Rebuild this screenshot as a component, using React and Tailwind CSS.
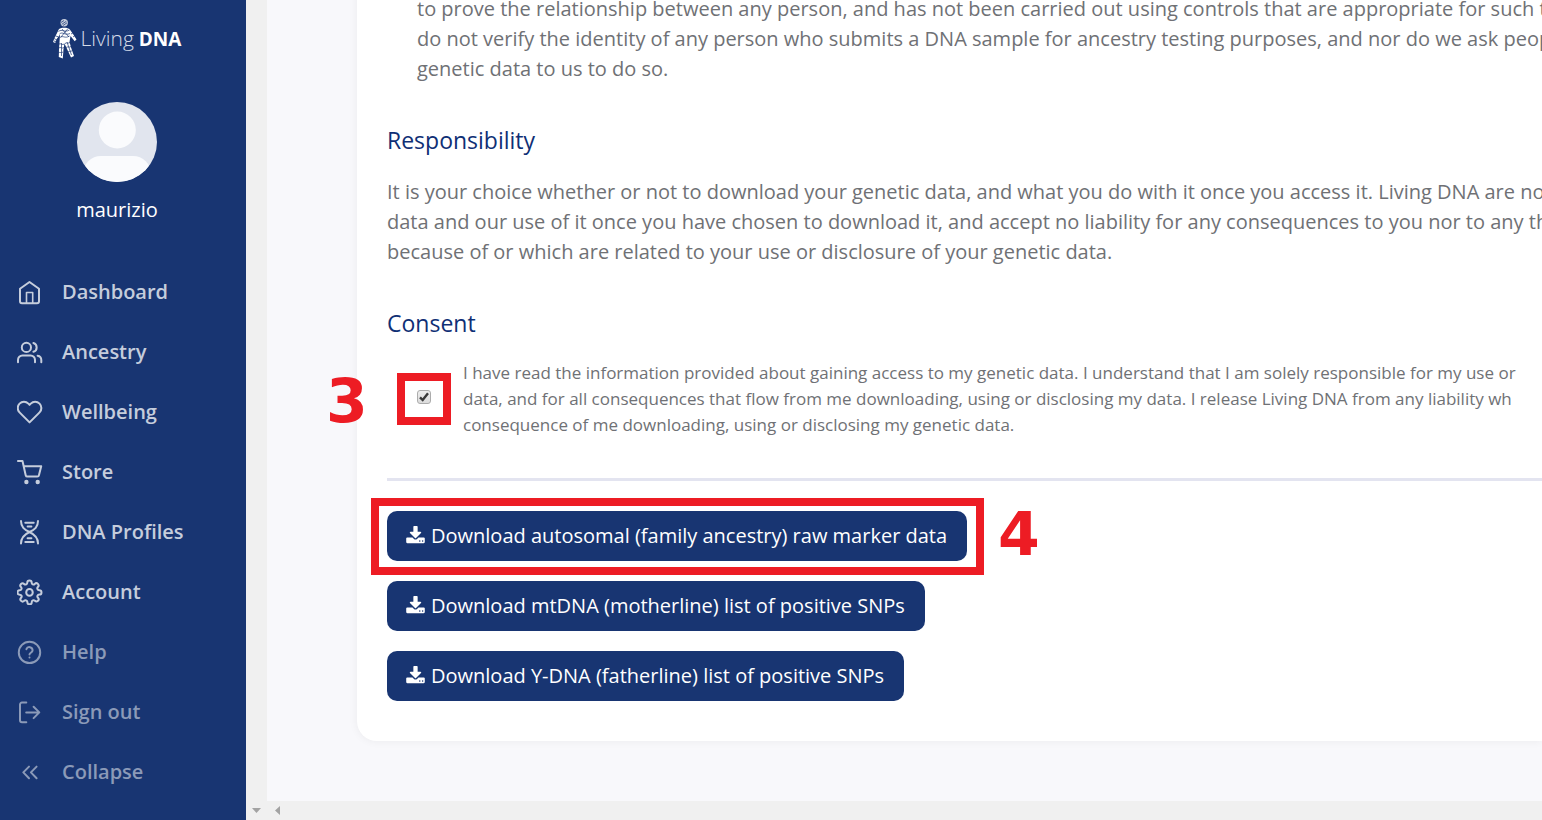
import React from "react";

function Icon({ children }) {
  return (
    <svg
      viewBox="0 0 26 26"
      className="size-[26px] shrink-0"
      fill="none"
      stroke="currentColor"
      strokeWidth="2"
      strokeLinecap="round"
      strokeLinejoin="round"
      aria-hidden="true"
    >
      {children}
    </svg>
  );
}

const icons = {
  home: (
    <>
      <path d="M3 9.7 12.5 3 22 9.7v12.6a2 2 0 0 1-2 2H5a2 2 0 0 1-2-2z" />
      <path d="M9.5 24V13.5h6.2V24" strokeWidth="1.6" />
    </>
  ),
  users: (
    <>
      <circle cx="9.4" cy="8.4" r="4.6" />
      <path d="M1 23.3v-2.4a4.4 4.4 0 0 1 4.4-4.4h8.2a4.4 4.4 0 0 1 4.4 4.4v2.4M16.4 4a4.6 4.6 0 0 1 0 8.8M20.6 16.7a4.4 4.4 0 0 1 3.7 4.3v2.3" />
    </>
  ),
  heart: (
    <path
      transform="translate(-1 -.6) scale(1.13)"
      strokeWidth="1.8"
      d="M20.84 4.61a5.5 5.5 0 0 0-7.78 0L12 5.67l-1.06-1.06a5.5 5.5 0 0 0-7.78 7.78l1.06 1.06L12 21.23l7.78-7.78 1.06-1.06a5.5 5.5 0 0 0 0-7.78z"
    />
  ),
  cart: (
    <>
      <path d="M.9 2h4.6l3.2 14.2a1.8 1.8 0 0 0 1.8 1.4h9.7a1.8 1.8 0 0 0 1.8-1.5L24.2 7.3H6.8" />
      <circle cx="9.4" cy="23" r="1.2" fill="currentColor" />
      <circle cx="20.7" cy="23" r="1.2" fill="currentColor" />
    </>
  ),
  dna: (
    <>
      <path d="M4 2C4 8 7.300 10.500 12.500 13S21 18.500 21 24.500M21 2C21 8 17.700 10.500 12.500 13S4 18.500 4 24.500" />
      <path d="M8.300 3.700h8.400M10.600 7.400h3.800M10.600 19.300h3.800M8.300 23h8.400" />
    </>
  ),
  gear: (
    <g transform="translate(-.6 .3) scale(1.09)" strokeWidth="1.85">
      <circle cx="12" cy="12" r="3" />
      <path d="M19.400 15a1.650 1.650 0 0 0 .33 1.820l.06.06a2 2 0 0 1-2.830 2.830l-.06-.06a1.650 1.650 0 0 0-1.820-.33 1.650 1.650 0 0 0-1 1.510V21a2 2 0 0 1-4 0v-.09A1.650 1.650 0 0 0 9 19.400a1.650 1.650 0 0 0-1.820.33l-.06.06a2 2 0 0 1-2.830-2.830l.06-.06a1.650 1.650 0 0 0 .33-1.820 1.650 1.650 0 0 0-1.510-1H3a2 2 0 0 1 0-4h.09A1.650 1.650 0 0 0 4.600 9a1.650 1.650 0 0 0-.33-1.820l-.06-.06a2 2 0 0 1 2.830-2.830l.06.06a1.650 1.650 0 0 0 1.820.33H9a1.650 1.650 0 0 0 1-1.510V3a2 2 0 0 1 4 0v.09a1.650 1.650 0 0 0 1 1.510 1.650 1.650 0 0 0 1.820-.33l.06-.06a2 2 0 0 1 2.830 2.830l-.06.06a1.650 1.650 0 0 0-.33 1.820V9a1.650 1.650 0 0 0 1.510 1H21a2 2 0 0 1 0 4h-.09a1.650 1.650 0 0 0-1.510 1z" />
    </g>
  ),
  help: (
    <>
      <circle cx="12.500" cy="13.400" r="10.700" />
      <path d="M9.400 10.200a3.200 3.200 0 0 1 6.200 1c0 2.100-3.100 2.700-3.100 4.200M12.500 18.400v.1" />
    </>
  ),
  signOut: (
    <path d="M9.300 23.300H5a2 2 0 0 1-2-2V5.500a2 2 0 0 1 2-2h4.300M9.200 13.400h13M16.600 7.700l5.700 5.700-5.700 5.700" />
  ),
  collapse: <path d="m12 7.600-5.700 5.800L12 19.200M19.600 7.600l-5.700 5.800 5.700 5.800" />,
};

const navItems = [
  { label: "Dashboard", icon: "home" },
  { label: "Ancestry", icon: "users" },
  { label: "Wellbeing", icon: "heart" },
  { label: "Store", icon: "cart" },
  { label: "DNA Profiles", icon: "dna" },
  { label: "Account", icon: "gear" },
  { label: "Help", icon: "help", muted: true },
  { label: "Sign out", icon: "signOut", muted: true },
];

function LogoFigure() {
  return (
    <svg viewBox="0 0 24 41" className="h-[41px] w-6 shrink-0" fill="none" aria-hidden="true">
      <circle cx="11.200" cy="4.800" r="3.700" fill="#fff" fillOpacity=".75" />
      <path
        fill="#fff"
        d="M6 11C8.500 9.300 14 9.300 16.500 11l3.500 5 3.500 5.500-1.800 1.700-4.200-5.200-1 6 1.700 6L21 38l-3 1.500-3.500-7.500-3-6.500-1 5.500-.7 9.500-4-1.500.2-8 .5-7 .5-7.500L3.700 21 2.200 25 0 24l1.500-4z"
      />
      <g stroke="#183572" strokeWidth=".7">
        <path d="m8.800 6.300 4.500-3M10 7.500l4-2.700M8 4.500l3-2" />
        <path d="M5.500 13.500c3.500-3 6 1.500 11-1.500M6.500 16c3.500-3 5 2 10.500-.5M7 19.500c3-2.500 5 1.500 9.500-1.500M9 11l7 8M15 10.500 8 19" />
        <path d="m1 20.500 3 1.500M.8 23l2.400.5M2.500 18l2.700.7M18 16l2.500-1.500M20 19l2-1.500" />
        <path d="M6 26c2-1 3 1.500 5.500 0M5.800 30c2-1.500 3 1 5-.5M5 35c2-1.500 3 .5 5-1M8.500 25v13" />
        <path d="M12 25.500c2-1.500 2.500.5 5-1M13 29.500c2-1.500 3 .5 5-1M15 34c1.500-1.500 2.500 0 4.500-1.500M14 24l4.500 13" />
      </g>
    </svg>
  );
}

function Sidebar() {
  return (
    <aside className="flex w-[246px] shrink-0 flex-col bg-[#183572]">
      <header className="flex flex-col items-center pr-3">
        <a href="#home" className="mt-[18px] flex items-center gap-1 text-white">
          <LogoFigure />
          <span className="flex items-baseline gap-[5px] leading-6">
            <span className="text-[21px] font-light text-[#d5dbe8]">Living</span>
            <span className="text-[19px] font-bold">DNA</span>
          </span>
        </a>
        <svg viewBox="0 0 80 80" className="mt-[43px] size-20" aria-hidden="true">
          <defs>
            <clipPath id="avatar">
              <circle cx="40" cy="40" r="40" />
            </clipPath>
          </defs>
          <g clipPath="url(#avatar)">
            <path fill="#e1e5ee" d="M0 0h80v80H0z" />
            <circle cx="40.300" cy="28" r="18.500" fill="#fafbfd" />
            <rect x="6" y="54" width="68" height="50" rx="18" fill="#fafbfd" />
          </g>
        </svg>
        <p className="mt-[13px] text-[20px] leading-[30px] text-white">maurizio</p>
      </header>
      <nav className="mt-[37px] flex flex-col">
        {navItems.map((item) => (
          <a
            key={item.label}
            href="#nav"
            className={
              item.muted
                ? "flex h-[60px] items-center gap-[19px] pl-[17px] text-[20px] font-semibold text-[#8b9ab8]"
                : "flex h-[60px] items-center gap-[19px] pl-[17px] text-[20px] font-semibold text-[#c5cddc]"
            }
          >
            <Icon>{icons[item.icon]}</Icon>
            {item.label}
          </a>
        ))}
        <button
          type="button"
          className="flex h-[60px] items-center gap-[19px] pl-[17px] text-[20px] font-semibold text-[#8b9ab8]"
        >
          <Icon>{icons.collapse}</Icon>
          Collapse
        </button>
      </nav>
    </aside>
  );
}

function DownloadButton({ children }) {
  return (
    <button
      type="button"
      className="flex h-[50px] items-center gap-[6px] rounded-[10px] bg-[#183572] pr-5 pl-[19px] text-[20px] whitespace-nowrap text-white"
    >
      <svg viewBox="64 0 1664 1792" className="h-5 w-[19px] shrink-0" fill="currentColor" aria-hidden="true">
        <path d="M1344 1344q0-26-19-45t-45-19-45 19-19 45 19 45 45 19 45-19 19-45zm256 0q0-26-19-45t-45-19-45 19-19 45 19 45 45 19 45-19 19-45zm128-224v320q0 40-28 68t-68 28h-1472q-40 0-68-28t-28-68v-320q0-40 28-68t68-28h465l135 136q58 56 136 56t136-56l136-136h464q40 0 68 28t28 68zm-325-569q17 41-14 70l-448 448q-18 19-45 19t-45-19l-448-448q-31-29-14-70 17-39 59-39h256v-448q0-26 19-45t45-19h256q26 0 45 19t19 45v448h256q42 0 59 39z" />
      </svg>
      <span>{children}</span>
    </button>
  );
}

function StepNumber({ className, children }) {
  return (
    <span
      className={`pointer-events-none absolute font-['DejaVu_Sans',sans-serif] text-[60px] leading-none font-bold text-[#ed1c24] ${className}`}
    >
      {children}
    </span>
  );
}

export default function App() {
  return (
    <div className="flex h-screen overflow-hidden bg-[#f8f8fb] font-['Open_Sans',sans-serif]">
      <Sidebar />
      <div className="flex w-[21px] shrink-0 flex-col items-center justify-end bg-[#f0f0f0] pb-[7px]">
        <svg viewBox="0 0 9 5" className="h-[5px] w-[9px]" fill="#a3a3a3" aria-hidden="true">
          <path d="M0 0h9L4.500 5z" />
        </svg>
      </div>
      <div className="flex min-w-0 flex-1 flex-col">
        <main className="flex min-h-0 flex-1 flex-col justify-end overflow-hidden pb-[60px] pl-[90px]">
          <article className="rounded-bl-[20px] bg-white px-[30px] pb-10 whitespace-nowrap text-[#6f7175] shadow-[0_0_10px_rgba(0,0,0,0.06)]">
            <ul className="pl-[30px] text-[20px] leading-[30px]">
              <li>
                to prove the relationship between any person, and has not been carried out using controls that are
                appropriate for such testing. We
                <br />
                do not verify the identity of any person who submits a DNA sample for ancestry testing purposes, and nor
                do we ask people
                <br />
                genetic data to us to do so.
              </li>
            </ul>
            <h2 className="mt-[39px] text-[23px] leading-[34px] font-medium text-[#0f2f75]">Responsibility</h2>
            <p className="mt-5 text-[20px] leading-[30px]">
              It is your choice whether or not to download your genetic data, and what you do with it once you access it.
              Living DNA are not
              <br />
              data and our use of it once you have chosen to download it, and accept no liability for any consequences to
              you nor to any third
              <br />
              because of or which are related to your use or disclosure of your genetic data.
            </p>
            <h2 className="mt-[39px] text-[23px] leading-[34px] font-medium text-[#0f2f75]">Consent</h2>
            <div className="relative mt-5 flex items-start pl-[30px]">
              <span className="mt-[30px] grid">
                <input
                  id="consent"
                  type="checkbox"
                  defaultChecked
                  className="peer col-start-1 row-start-1 size-[14px] appearance-none rounded-[3px] border border-[#acacac] bg-linear-to-b from-[#eeeeee] to-[#dcdcdc]"
                />
                <svg
                  viewBox="0 0 14 14"
                  className="pointer-events-none invisible col-start-1 row-start-1 size-[14px] peer-checked:visible"
                  fill="none"
                  stroke="#3a3a3a"
                  strokeWidth="2.400"
                  aria-hidden="true"
                >
                  <path d="m3 7.300 2.700 2.700L11 3.300" />
                </svg>
              </span>
              <label htmlFor="consent" className="ml-8 text-[17px] leading-[26px]">
                I have read the information provided about gaining access to my genetic data. I understand that I am
                solely responsible for my use or
                <br />
                data, and for all consequences that flow from me downloading, using or disclosing my data. I release
                Living DNA from any liability wh
                <br />
                consequence of me downloading, using or disclosing my genetic data.
              </label>
              <span className="pointer-events-none absolute top-[13px] left-[10px] h-[52px] w-[54px] border-8 border-[#ed1c24]" />
              <StepNumber className="top-[11px] left-[-61px]">3</StepNumber>
            </div>
            <hr className="mt-10 mr-[-30px] border-t-[3px] border-[#e3e4f0]" />
            <div className="mt-[30px] flex flex-col items-start gap-5">
              <div className="relative">
                <DownloadButton>Download autosomal (family ancestry) raw marker data</DownloadButton>
                <span className="pointer-events-none absolute -top-[13px] -right-[17px] -bottom-[14px] -left-4 border-8 border-[#ed1c24]" />
                <StepNumber className="top-[-7px] left-[611px]">4</StepNumber>
              </div>
              <DownloadButton>Download mtDNA (motherline) list of positive SNPs</DownloadButton>
              <DownloadButton>Download Y-DNA (fatherline) list of positive SNPs</DownloadButton>
            </div>
          </article>
        </main>
        <div className="flex h-[19px] shrink-0 items-center bg-[#f0f0f0] pl-2">
          <svg viewBox="0 0 5 9" className="h-[9px] w-[5px]" fill="#a3a3a3" aria-hidden="true">
            <path d="M5 0v9L0 4.500z" />
          </svg>
        </div>
      </div>
    </div>
  );
}
